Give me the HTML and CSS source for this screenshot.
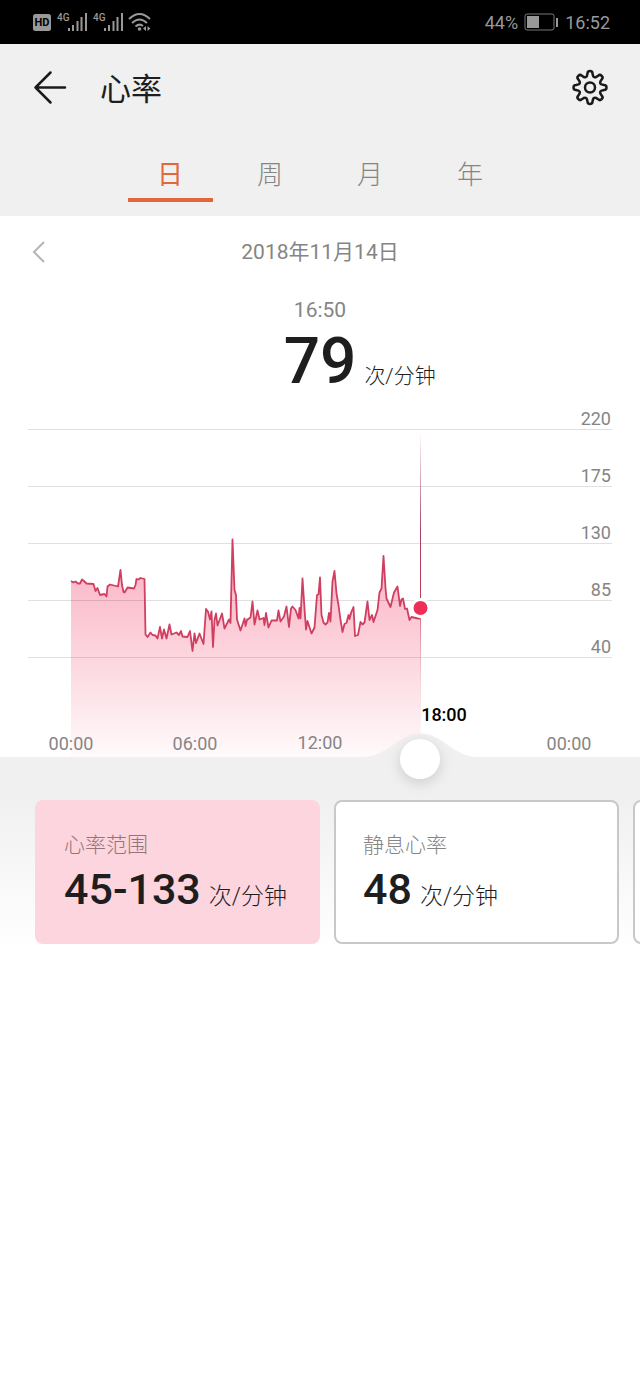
FILE: index.html
```html
<!DOCTYPE html>
<html lang="zh-CN">
<head>
    <meta charset="UTF-8">
    <meta name="viewport" content="width=device-width, initial-scale=1.0">
    <title>心率</title>
    <link rel="stylesheet" href="styles.css">
</head>
<body>
    <div class="status-bar">
        <svg class="status-icons" width="118" height="20" viewBox="0 0 118 20">
            <rect x="0" y="2" width="18" height="17" rx="2.5"/>
            <text class="hd-text" x="9" y="14" text-anchor="middle">HD</text>
            <text class="net-text" x="24" y="9">4G</text>
            <path d="M35 16h2v3h-2zM39 13h2v6h-2zM43.500 9h2v10h-2zM47.500 5h2v14h-2zM52 1h2v18h-2z"/>
            <text class="net-text" x="60" y="9">4G</text>
            <path d="M71 16h2v3h-2zM75 13h2v6h-2zM79.500 9h2v10h-2zM83.500 5h2v14h-2zM88 1h2v18h-2z"/>
            <g class="wifi-arcs">
                <path d="M96 7Q106.500 -3 117 7M99 11Q106.500 4 114 11M102.500 14.500Q106.500 11 110 14"/>
            </g>
            <circle cx="106.500" cy="17" r="1.800"/>
            <path d="M113 14v5l-3-2.500zM114.500 14v5l3-2.500z"/>
        </svg>
        <div class="status-right">
            <span>44%</span>
            <svg width="35" height="18" viewBox="0 0 35 18">
                <rect class="battery-case" x="1" y="1" width="29" height="16" rx="2"/>
                <rect x="3" y="3" width="12" height="12"/>
                <rect x="32" y="5" width="2" height="9"/>
            </svg>
            <span>16:52</span>
        </div>
    </div>

    <header class="header">
        <div class="title-row">
            <button class="icon-button" aria-label="返回">
                <svg width="34" height="36" viewBox="0 0 34 36">
                    <path d="M32 17.500H2.500M17.500 2.500L2.500 17.500l15 15"/>
                </svg>
            </button>
            <h1 class="title">心率</h1>
            <button class="icon-button" aria-label="设置">
                <svg width="38" height="38" viewBox="-19 -18.500 38 38">
                    <path d="M-3.100 -11.600L-2.500 -14A2.500 2.500 0 0 1 2.500 -14L3.100 -11.600A2 2 0 0 0 6 -10.400L8.100 -11.700A2.500 2.500 0 0 1 11.700 -8.100L10.400 -6A2 2 0 0 0 11.600 -3.100L14 -2.500A2.500 2.500 0 0 1 14 2.500L11.600 3.100A2 2 0 0 0 10.400 6L11.700 8.100A2.500 2.500 0 0 1 8.100 11.700L6 10.400A2 2 0 0 0 3.100 11.600L2.500 14A2.500 2.500 0 0 1 -2.500 14L-3.100 11.600A2 2 0 0 0 -6 10.400L-8.100 11.700A2.500 2.500 0 0 1 -11.700 8.100L-10.400 6A2 2 0 0 0 -11.600 3.100L-14 2.500A2.500 2.500 0 0 1 -14 -2.500L-11.600 -3.100A2 2 0 0 0 -10.400 -6L-11.700 -8.100A2.500 2.500 0 0 1 -8.100 -11.700L-6 -10.400A2 2 0 0 0 -3.100 -11.600Z"/>
                    <circle r="5"/>
                </svg>
            </button>
        </div>
        <nav class="tabs">
            <button class="tab active">日</button>
            <button class="tab">周</button>
            <button class="tab">月</button>
            <button class="tab">年</button>
        </nav>
    </header>

    <main>
        <div class="date-row">
            <button class="prev-button" aria-label="前一天">
                <svg width="14" height="24" viewBox="0 0 14 24">
                    <path d="M12 2L2 12l10 10"/>
                </svg>
            </button>
            <span class="date">2018年11月14日</span>
        </div>

        <div class="reading">
            <div class="reading-time">16:50</div>
            <div class="reading-row">
                <span class="reading-value">79</span>
                <span class="reading-unit">次/分钟</span>
            </div>
        </div>

        <div class="chart">
            <svg class="chart-svg" viewBox="0 0 640 358">
                <defs>
                    <linearGradient id="areaFill" gradientUnits="userSpaceOnUse" x1="0" y1="170" x2="0" y2="357">
                        <stop offset="0" stop-color="#fbb8c8"/>
                        <stop offset="0.500" stop-color="#fcd8e0"/>
                        <stop offset="1" stop-color="#fffafb"/>
                    </linearGradient>
                    <linearGradient id="cursorFill" x1="0" y1="0" x2="0" y2="1">
                        <stop offset="0" stop-color="#a84460" stop-opacity="0"/>
                        <stop offset="0.600" stop-color="#a84460"/>
                        <stop offset="1" stop-color="#c43a5c"/>
                    </linearGradient>
                    <linearGradient id="cursorTail" x1="0" y1="0" x2="0" y2="1">
                        <stop offset="0" stop-color="#d87890"/>
                        <stop offset="1" stop-color="#fbdde4" stop-opacity="0"/>
                    </linearGradient>
                </defs>
                <path class="area" d="M71 357V181L73.500 182.500 75.500 181.500 78 183.500 80 183.500 82 179.500 84.500 181.500 86.500 183.500 93.500 184 95.500 191 97.500 188 100 195 104.500 194 106.500 196.500 107.500 186.500 110 184.500 118 186.500 120.500 170 122 185 123.500 192 124.500 192.500 127.500 187.500 134 188.500 135.500 185 136.500 179 144.500 179 145.500 234.500 147.500 237 150.500 232.500 152.500 235 155.500 235.500 157.500 238.500 160 227 162 238.500 164 229.500 166.500 238.500 169.500 224.500 171.500 234.500 176.500 232.500 179 235 181 231 182.500 236.500 187.500 237 190 231 192.500 251 194.500 233.500 196 243 199.500 233.500 203.500 244 206 209 208 211.500 210 219.500 211.500 211.500 213 247 214.500 220 216 213.500 217.500 225.500 222 213.500 224.500 228.500 229 219.500 230.500 223 232.500 139.500 234.500 190 236 195 237 219.500 240.500 230.500 244.500 218.500 250.500 217.500 252.500 201.500 254.500 224.500 257.500 210.500 259.500 219.500 263.500 218 264.500 225 266 213 268.500 227.500 271.500 220.500 277 220.500 278.500 210.500 280.500 221.500 284 216.500 286.500 206.500 289 227 291 208.500 292.500 206.500 295.500 210 298.500 218.500 299.500 208 300.500 218.500 302.500 178.500 304.500 208.500 306 229.500 307.500 221 311.500 233.500 314.500 227.500 317 195 318.500 194.500 320 177.500 321.500 215 323.500 222.500 325.500 224.500 327.500 222.500 329 213 330.500 221.500 332.500 181.500 334.500 171 336.500 193.500 338.500 205 340.500 220 342.500 232 344.500 224 346.500 223 348.500 215 353.500 207 355 236 358 235 360.500 222 364.500 222.500 367.500 201.500 369.500 220 372 215 373.500 222 377.500 210 379.500 192.500 381.500 188.500 383.500 156 385.500 188 386.500 198.500 390.500 207 394 192.500 397.500 186.500 400 206 401.500 199.500 403 198.500 405 209 407 208.500 409.500 220 411.500 217 420.500 218.500V357Z"/>
                <path class="grid-lines" d="M28 29.500H612M28 86.500H612M28 143.500H612M28 200.500H612M28 257.500H612"/>
                <polyline class="rate-line" points="71,181 73.500,182.500 75.500,181.500 78,183.500 80,183.500 82,179.500 84.500,181.500 86.500,183.500 93.500,184 95.500,191 97.500,188 100,195 104.500,194 106.500,196.500 107.500,186.500 110,184.500 118,186.500 120.500,170 122,185 123.500,192 124.500,192.500 127.500,187.500 134,188.500 135.500,185 136.500,179 138.500,179.500 140.500,178 144.500,179 145.500,234.500 147.500,237 150.500,232.500 152.500,235 155.500,235.500 157.500,238.500 160,227 162,238.500 164,229.500 166.500,238.500 169.500,224.500 171.500,234.500 176.500,232.500 179,235 181,231 182.500,236.500 187.500,237 190,231 192.500,251 194.500,233.500 196,243 199.500,233.500 203.500,244 206,209 208,211.500 210,219.500 211.500,211.500 213,247 214.500,220 216,213.500 217.500,225.500 222,213.500 224.500,228.500 229,219.500 230.500,223 232.500,139.500 234.500,190 236,195 237,219.500 240.500,230.500 244.500,218.500 245.500,226 247,220 250.500,217.500 252.500,201.500 254.500,224.500 257.500,210.500 259.500,219.500 263.500,218 264.500,225 266,213 268.500,227.500 271.500,220.500 277,220.500 278.500,210.500 280.500,221.500 284,216.500 286.500,206.500 289,227 291,208.500 292.500,206.500 295.500,210 298.500,218.500 299.500,208 300.500,218.500 302.500,178.500 304.500,208.500 306,229.500 307.500,221 311.500,233.500 314.500,227.500 317,195 318.500,194.500 320,177.500 321.500,215 323.500,222.500 325.500,224.500 327.500,222.500 329,213 330.500,221.500 332.500,181.500 334.500,171 336.500,193.500 338.500,205 340.500,220 342.500,232 344.500,224 346.500,223 348.500,215 349.500,219 351.500,211.500 353.500,207 355,236 358,235 360.500,222 362.500,224.500 364.500,222.500 367.500,201.500 369.500,220 372,215 373.500,222 377.500,210 379.500,192.500 381.500,188.500 383.500,156 385.500,188 386.500,198.500 390.500,207 394,192.500 397.500,186.500 400,206 401.500,199.500 403,198.500 405,209 407,208.500 409.500,220 411.500,217 418,218.500 420.500,218.500"/>
                <rect x="420" y="32" width="1" height="166" fill="url(#cursorFill)"/>
                <rect x="420" y="218" width="1" height="117" fill="url(#cursorTail)"/>
                <circle class="marker" cx="420.500" cy="208" r="8.500"/>
                <g class="axis-text" text-anchor="end">
                    <text x="611" y="25">220</text>
                    <text x="611" y="82">175</text>
                    <text x="611" y="139">130</text>
                    <text x="611" y="196">85</text>
                    <text x="611" y="253">40</text>
                </g>
                <g class="axis-text" text-anchor="middle">
                    <text x="71" y="350">00:00</text>
                    <text x="195" y="350">06:00</text>
                    <text x="320" y="349">12:00</text>
                    <text class="axis-current" x="444" y="321">18:00</text>
                    <text x="569" y="350">00:00</text>
                </g>
                <path class="hump" d="M0 357H362C388 357 398 333.500 420.500 333.500C443 333.500 453 357 478 357H640V358H0Z"/>
            </svg>
            <input class="time-slider" type="range" min="0" max="1440" value="1010" aria-label="时间">
        </div>

        <section class="cards">
            <div class="card selected">
                <div class="card-label">心率范围</div>
                <div class="card-row">
                    <span class="card-value">45-133</span>
                    <span class="card-unit">次/分钟</span>
                </div>
            </div>
            <div class="card">
                <div class="card-label">静息心率</div>
                <div class="card-row">
                    <span class="card-value">48</span>
                    <span class="card-unit">次/分钟</span>
                </div>
            </div>
            <div class="card"></div>
        </section>
    </main>
</body>
</html>
```

FILE: styles.css
```css
:root {
    --accent: #e2683c;
    --panel: #f0f0f0;
    --text: #1e1e1e;
    --muted: #858585;
}

* {
    margin: 0;
    padding: 0;
    box-sizing: border-box;
}

body {
    background: #fff;
    color: var(--text);
    font-family: Roboto, 'Noto Sans CJK SC', sans-serif;
}

button {
    border: none;
    background: none;
    font-family: inherit;
    cursor: pointer;
}

svg {
    display: block;
}

/* status bar */
.status-bar {
    height: 44px;
    padding: 0 30px 0 33px;
    background: #000;
    color: #999;
    font-size: 18px;
    display: flex;
    align-items: center;
    justify-content: space-between;
}

.status-bar svg {
    fill: #999;
}

.status-icons .hd-text {
    fill: #000;
    font-size: 11px;
    font-weight: 700;
}

.net-text {
    font-size: 10px;
    font-weight: 500;
}

.wifi-arcs {
    fill: none;
    stroke: #999;
    stroke-width: 2;
}

.status-right {
    display: flex;
    align-items: center;
    gap: 6px;
}

.status-right .battery-case {
    fill: none;
    stroke: #777;
    stroke-width: 1;
}

/* header */
.header {
    background: var(--panel);
}

.title-row {
    display: flex;
    align-items: center;
    height: 88px;
    padding: 0 31px 0 33px;
}

.icon-button svg {
    fill: none;
    stroke: #1a1a1a;
    stroke-width: 2.5;
    stroke-linecap: round;
    stroke-linejoin: round;
}

.title {
    flex: 1;
    margin-left: 33px;
    padding-top: 4px;
    font-size: 31px;
    font-weight: 400;
    line-height: 44px;
}

.tabs {
    display: flex;
    justify-content: center;
    gap: 15px;
    height: 84px;
    padding-bottom: 14px;
}

.tab {
    width: 85px;
    border-bottom: 4px solid transparent;
    color: var(--muted);
    font-size: 26px;
    font-weight: 300;
    line-height: 38px;
    padding-top: 20px;
}

.tab.active {
    color: var(--accent);
    font-weight: 400;
    border-color: var(--accent);
}

/* date and current reading */
.date-row {
    display: grid;
    grid-template-columns: 1fr auto 1fr;
    align-items: center;
    height: 72px;
    padding: 0 32px;
}

.prev-button {
    justify-self: start;
}

.prev-button svg {
    fill: none;
    stroke: #b5b5b5;
    stroke-width: 2;
}

.date,
.reading-time {
    color: var(--muted);
    font-size: 21px;
    line-height: 32px;
}

.reading {
    height: 112px;
    padding-top: 6px;
    text-align: center;
}

.reading-row {
    display: grid;
    grid-template-columns: 1fr auto 1fr;
    align-items: baseline;
    column-gap: 8px;
}

.reading-value {
    grid-column: 2;
    font-size: 64px;
    font-weight: 500;
    line-height: 72px;
}

.reading-unit {
    font-size: 21px;
    font-weight: 300;
    text-align: left;
}

/* chart */
.chart {
    position: relative;
}

.chart-svg {
    width: 100%;
    height: auto;
}

.area {
    fill: url(#areaFill);
}

.grid-lines {
    stroke: #000;
    stroke-opacity: 0.12;
}

.rate-line {
    fill: none;
    stroke: #d03e60;
    stroke-width: 1.8;
    stroke-linejoin: round;
}

.marker {
    fill: #ee2f57;
    stroke: #fff;
    stroke-width: 3;
}

.axis-text {
    fill: var(--muted);
    font-size: 18px;
}

.axis-current {
    fill: #000;
    font-weight: 500;
}

.hump {
    fill: var(--panel);
}

.time-slider {
    position: absolute;
    left: 8%;
    bottom: -21px;
    width: 84%;
    height: 40px;
    appearance: none;
    background: transparent;
}

.time-slider::-webkit-slider-thumb {
    appearance: none;
    width: 40px;
    height: 40px;
    border-radius: 50%;
    background: #fff;
    box-shadow: 0 4px 14px rgba(0, 0, 0, 0.15);
}

/* cards */
.cards {
    display: flex;
    gap: 14px;
    padding: 42px 0 14px 35px;
    background: linear-gradient(var(--panel) 20%, #fff 95%);
    overflow: hidden;
}

.card {
    flex: 0 0 285px;
    height: 144px;
    padding: 27px;
    border: 2px solid #c8c8c8;
    border-radius: 8px;
    background: #fff;
}

.card.selected {
    background: #fcd5de;
    border-color: #fcd5de;
}

.card-label {
    color: var(--muted);
    font-size: 21px;
    font-weight: 300;
    line-height: 32px;
}

.selected .card-label {
    color: #94747c;
}

.card-row {
    display: flex;
    align-items: baseline;
    gap: 8px;
    line-height: 56px;
}

.card-value {
    font-size: 43px;
    font-weight: 500;
}

.card-unit {
    font-size: 23px;
    font-weight: 300;
}
```
